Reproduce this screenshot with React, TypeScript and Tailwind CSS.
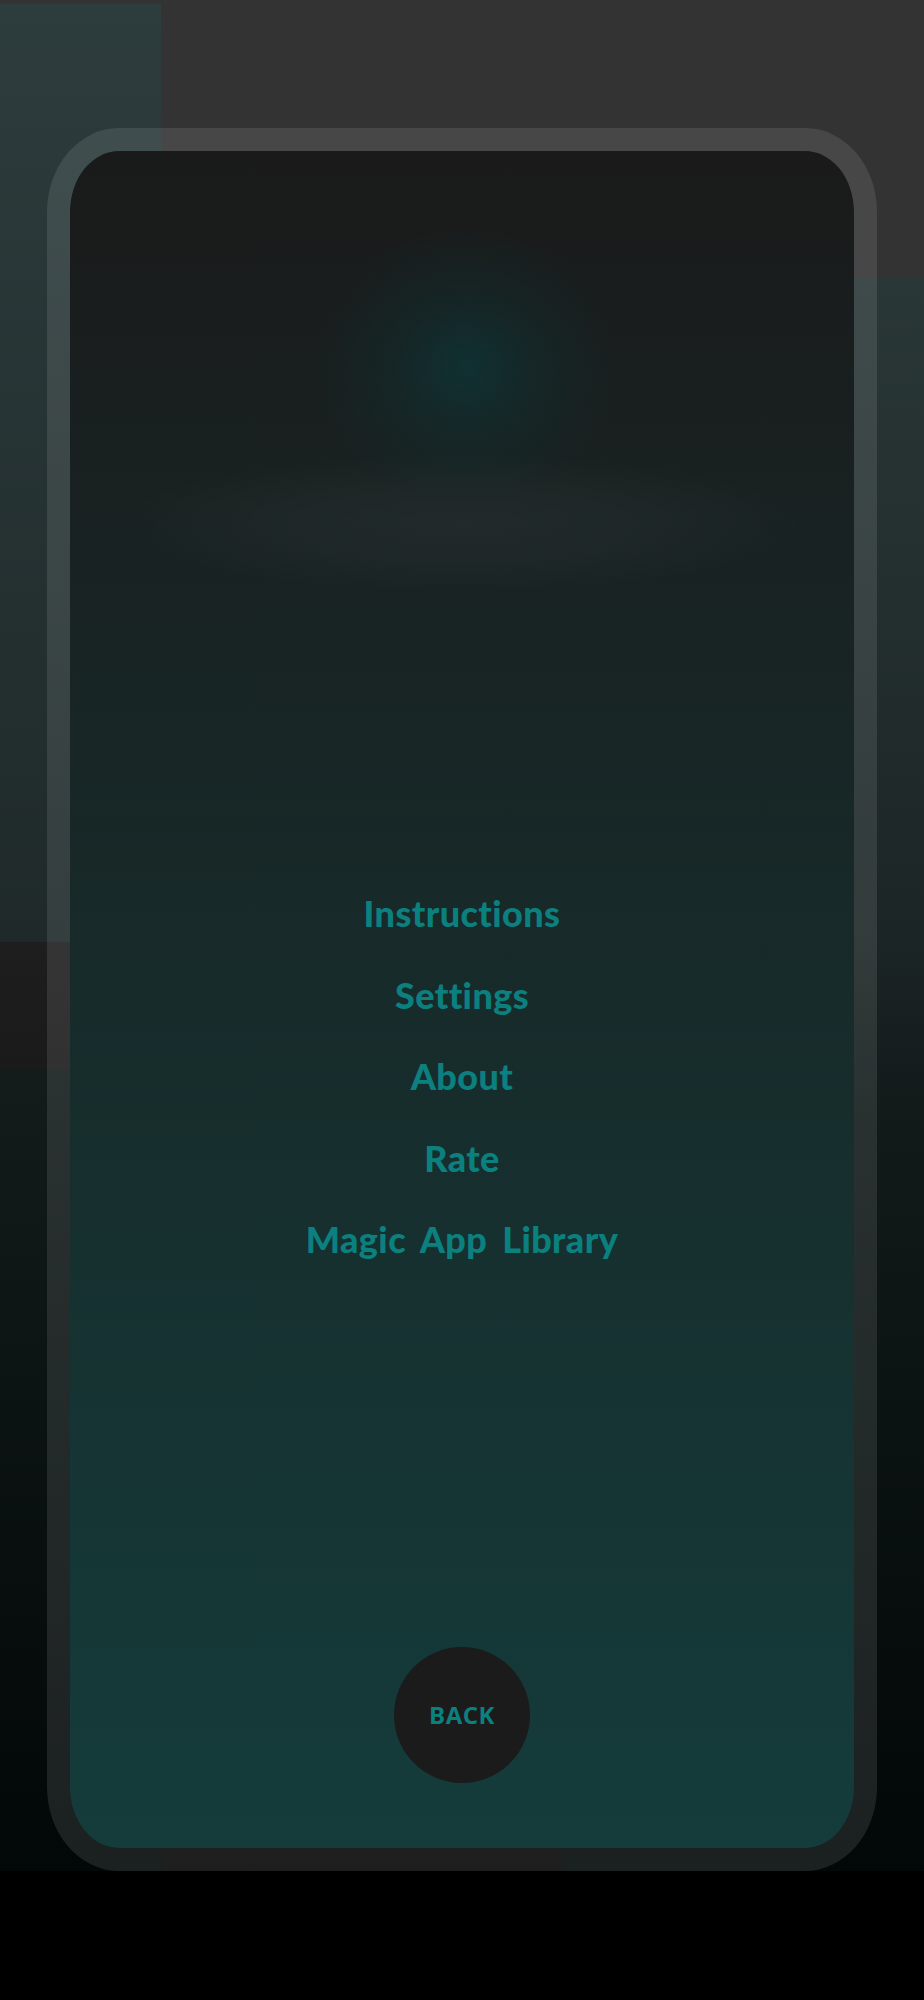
import React from "react";

const items = ["Instructions", "Settings", "About", "Rate", "Magic App Library"];

export default function App() {
  return (
    <div className="h-[2000px] w-full overflow-hidden bg-black bg-no-repeat pl-[47px] pt-[128px] [background-image:linear-gradient(#2d3c3d,#1f2929),linear-gradient(#131b1b,#020707),linear-gradient(#2a3737_0px,#1c2525_664px,#121a1a_822px,#020707_1593px),linear-gradient(#333333_0px,#333333_300px,#1c1c1c_1000px,#050505_1871px)] [background-position:0_4px,0_1070px,561px_278px,0_0] [background-size:161px_938px,161px_801px,363px_1593px,100%_1871px]">
      {/* phone */}
      <div className="flex h-[1743px] w-[830px] flex-col items-center rounded-[72px/84px] border-[23px] border-white/10 bg-clip-padding bg-no-repeat [background-image:radial-gradient(ellipse_150px_140px_at_396px_216px,rgba(12,56,58,0.7),rgba(12,56,58,0.3)_45%,transparent),radial-gradient(ellipse_350px_70px_at_392px_372px,rgba(255,255,255,0.04),rgba(255,255,255,0.025)_55%,transparent),linear-gradient(#1a1a1a,#143c3b)]">
        <nav className="mt-[722px] flex flex-col items-center font-['Lato',sans-serif] text-[36px] font-black leading-[81.5px] tracking-[0.4px] text-[#0b807f] [font-variant-ligatures:none] [word-spacing:6px]">
          {items.map((t) => (
            <span key={t}>{t}</span>
          ))}
        </nav>

        <button className="mt-auto mb-[65px] flex h-[136px] w-[136px] items-center justify-center rounded-full bg-[#1b1b1b] font-['Open_Sans',sans-serif] text-[24px] font-bold tracking-[0.5px] text-[#0b807f]">
          BACK
        </button>
      </div>
    </div>
  );
}
